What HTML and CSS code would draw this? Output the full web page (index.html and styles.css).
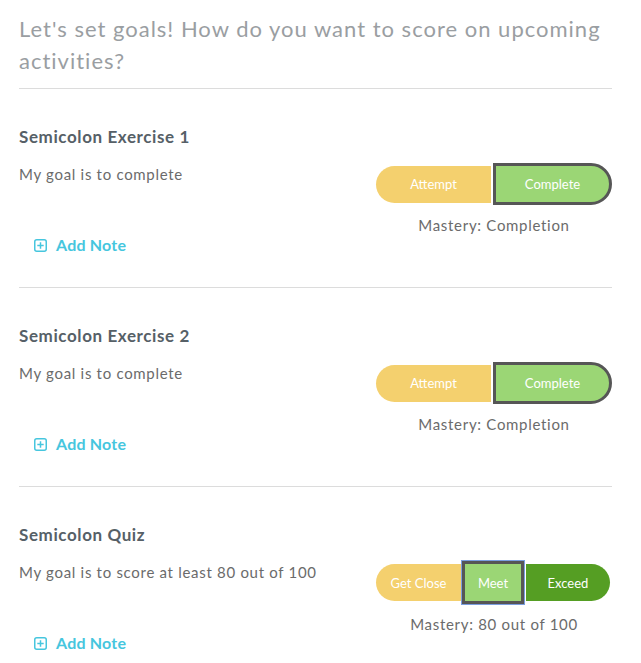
FILE: index.html
```html
<!DOCTYPE html>
<html>
<head>
<meta charset="utf-8">
<link rel="stylesheet" href="styles.css">
</head>
<body>
<div class="page">
  <h1 class="intro">Let's set goals! How do you want to score on upcoming activities?</h1>

  <section class="goal">
    <h2 class="goal-title">Semicolon Exercise 1</h2>
    <div class="goal-row">
      <div class="goal-left">
        <p class="goal-text">My goal is to complete</p>
        <a class="add-note"><svg class="plus" width="13" height="13" viewBox="0 0 13 13"><rect x="0.75" y="0.75" width="11.5" height="11.5" rx="2" fill="none" stroke="currentColor" stroke-width="1.5"/><path d="M6.5 3.3v6.4M3.3 6.5h6.4" stroke="currentColor" stroke-width="1.5"/></svg>Add Note</a>
      </div>
      <div class="goal-right">
        <div class="btn-group">
          <span class="btn yellow first w-attempt">Attempt</span>
          <span class="btn light selected last w-complete">Complete</span>
        </div>
        <p class="mastery">Mastery: Completion</p>
      </div>
    </div>
  </section>

  <section class="goal">
    <h2 class="goal-title">Semicolon Exercise 2</h2>
    <div class="goal-row">
      <div class="goal-left">
        <p class="goal-text">My goal is to complete</p>
        <a class="add-note"><svg class="plus" width="13" height="13" viewBox="0 0 13 13"><rect x="0.75" y="0.75" width="11.5" height="11.5" rx="2" fill="none" stroke="currentColor" stroke-width="1.5"/><path d="M6.5 3.3v6.4M3.3 6.5h6.4" stroke="currentColor" stroke-width="1.5"/></svg>Add Note</a>
      </div>
      <div class="goal-right">
        <div class="btn-group">
          <span class="btn yellow first w-attempt">Attempt</span>
          <span class="btn light selected last w-complete">Complete</span>
        </div>
        <p class="mastery">Mastery: Completion</p>
      </div>
    </div>
  </section>

  <section class="goal last-goal">
    <h2 class="goal-title">Semicolon Quiz</h2>
    <div class="goal-row">
      <div class="goal-left">
        <p class="goal-text">My goal is to score at least 80 out of 100</p>
        <a class="add-note"><svg class="plus" width="13" height="13" viewBox="0 0 13 13"><rect x="0.75" y="0.75" width="11.5" height="11.5" rx="2" fill="none" stroke="currentColor" stroke-width="1.5"/><path d="M6.5 3.3v6.4M3.3 6.5h6.4" stroke="currentColor" stroke-width="1.5"/></svg>Add Note</a>
      </div>
      <div class="goal-right">
        <div class="btn-group">
          <span class="btn yellow first w-close">Get Close</span>
          <span class="btn light selected focus w-meet">Meet</span>
          <span class="btn dark last w-exceed">Exceed</span>
        </div>
        <p class="mastery">Mastery: 80 out of 100</p>
      </div>
    </div>
  </section>
</div>
</body>
</html>
```

FILE: styles.css
```css
* { box-sizing: border-box; }
html, body { margin: 0; padding: 0; background: #fff; }
body {
  font-family: Lato, "Open Sans", "Liberation Sans", sans-serif;
  color: #6b6b6b;
  overflow: hidden;
}
.page {
  width: 593px;
  margin-left: 19px;
}
.intro {
  margin: 0;
  padding-top: 13px;
  padding-bottom: 11px;
  font-size: 22px;
  line-height: 32px;
  font-weight: 400;
  letter-spacing: 1px;
  color: #9a9ea2;
  border-bottom: 1px solid #dcdcdc;
}
.goal {
  padding-top: 36px;
  height: 199px;
  border-bottom: 1px solid #dcdcdc;
}
.last-goal { border-bottom: none; }
.goal-title {
  margin: 0;
  font-size: 17px;
  line-height: 24px;
  font-weight: 700;
  letter-spacing: 0.6px;
  color: #566067;
}
.goal-row {
  display: flex;
  justify-content: space-between;
  margin-top: 14px;
}
.goal-left {
  display: flex;
  flex-direction: column;
}
.goal-text {
  margin: 0;
  font-size: 15px;
  line-height: 22px;
  letter-spacing: 0.7px;
  color: #6b6b6b;
}
.add-note {
  display: flex;
  align-items: center;
  gap: 9px;
  margin-top: 49px;
  margin-left: 15px;
  font-size: 16px;
  line-height: 22px;
  font-weight: 700;
  letter-spacing: 0.2px;
  color: #46c6de;
}
.plus { color: #46c6de; }
.goal-right {
  width: 236px;
  display: flex;
  flex-direction: column;
  align-items: center;
}
.btn-group {
  display: flex;
  align-items: center;
  gap: 2px;
  width: 236px;
}
.btn {
  display: flex;
  align-items: center;
  justify-content: center;
  height: 37px;
  font-size: 13px;
  color: #fff;
}
.yellow { background: #f4d06e; }
.light { background: #9bd675; }
.dark { background: #559e23; }
.first { border-radius: 19px 0 0 19px; }
.last { border-radius: 0 21px 21px 0; }
.selected {
  height: 42px;
  border: 3px solid #565656;
}
.focus {
  outline: 1px solid #7a9ee0;
  height: 43px;
}
.w-attempt { width: 115px; }
.w-complete { width: 119px; }
.w-close { width: 85px; }
.w-meet { width: 62px; margin-left: -1px; }
.w-exceed { width: 84px; }
.mastery {
  margin: 10px 0 0;
  font-size: 15px;
  line-height: 20px;
  letter-spacing: 0.7px;
  color: #6b6b6b;
}
```
